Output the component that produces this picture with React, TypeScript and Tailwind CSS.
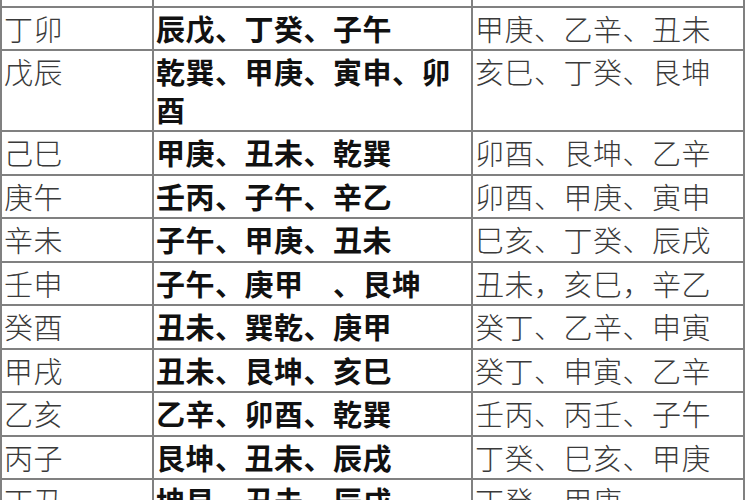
const rows: [string, string, string][] = [
  ["丙寅", "乙辛、甲庚、艮坤", "丁癸、乾巽、子午"],
  ["丁卯", "辰戊、丁癸、子午", "甲庚、乙辛、丑未"],
  ["戊辰", "乾巽、甲庚、寅申、卯酉", "亥巳、丁癸、艮坤"],
  ["己巳", "甲庚、丑未、乾巽", "卯酉、艮坤、乙辛"],
  ["庚午", "壬丙、子午、辛乙", "卯酉、甲庚、寅申"],
  ["辛未", "子午、甲庚、丑未", "巳亥、丁癸、辰戌"],
  ["壬申", "子午、庚甲　、艮坤", "丑未，亥巳，辛乙"],
  ["癸酉", "丑未、巽乾、庚甲", "癸丁、乙辛、申寅"],
  ["甲戌", "丑未、艮坤、亥巳", "癸丁、申寅、乙辛"],
  ["乙亥", "乙辛、卯酉、乾巽", "壬丙、丙壬、子午"],
  ["丙子", "艮坤、丑未、辰戌", "丁癸、巳亥、甲庚"],
  ["丁丑", "坤艮、丑未、辰戌", "丁癸、甲庚"],
];

export default function App() {
  return (
    <div className="w-[750px] h-[500px] overflow-hidden bg-white">
      <table
        className="-mt-[38px] table-fixed border-collapse text-[29px] tracking-[0.5px] leading-[37.5px]"
        style={{ fontFamily: '"Noto Sans CJK SC", sans-serif' }}
      >
        <colgroup>
          <col className="w-[152px]" />
          <col className="w-[319px]" />
          <col className="w-[272px]" />
        </colgroup>
        <tbody>
          {rows.map(([a, b, c]) => (
            <tr key={a}>
              <td className="border-2 border-[#808080] px-[2px] py-[2px] align-top font-light text-[#3a3a3a]">
                {a}
              </td>
              <td className="border-2 border-[#808080] px-[2px] py-[2px] align-top font-bold text-[#111]">
                {b}
              </td>
              <td className="border-2 border-[#808080] px-[2px] py-[2px] align-top font-light text-[#3a3a3a]">
                {c}
              </td>
            </tr>
          ))}
        </tbody>
      </table>
    </div>
  );
}
